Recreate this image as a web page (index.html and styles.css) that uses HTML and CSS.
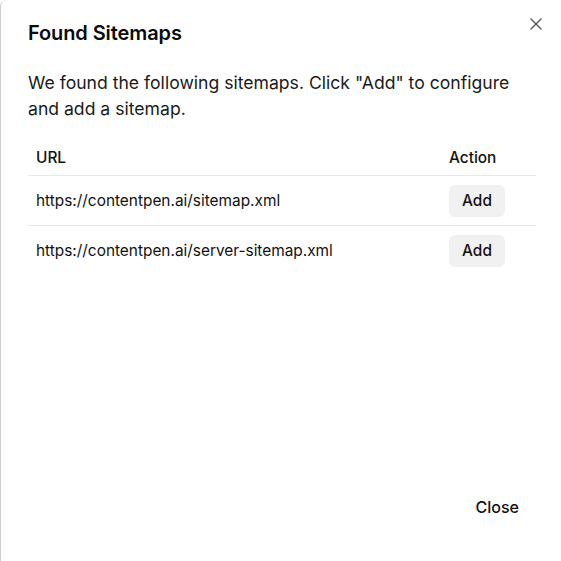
FILE: index.html
```html
<!DOCTYPE html>
<html>
<head>
<meta charset="utf-8">
<link rel="stylesheet" href="styles.css">
</head>
<body>
<div class="dialog">
  <button class="x" aria-label="Close">
    <svg width="12" height="12" viewBox="0 0 12 12"><path d="M1 1L11 11M11 1L1 11" stroke="#555" stroke-width="1.4" stroke-linecap="round"/></svg>
  </button>
  <h2 class="title">Found Sitemaps</h2>
  <p class="desc">We found the following sitemaps. Click "Add" to configure and add a sitemap.</p>
  <table class="tbl">
    <thead>
      <tr><th class="c-url">URL</th><th class="c-act">Action</th></tr>
    </thead>
    <tbody>
      <tr><td class="c-url">https://contentpen.ai/sitemap.xml</td><td class="c-act"><button class="add">Add</button></td></tr>
      <tr><td class="c-url">https://contentpen.ai/server-sitemap.xml</td><td class="c-act"><button class="add">Add</button></td></tr>
    </tbody>
  </table>
  <div class="footer"><button class="close">Close</button></div>
</div>
</body>
</html>
```
FILE: styles.css
```css
html, body { margin: 0; padding: 0; background: #fff; }
body { font-family: Inter, "Noto Sans", sans-serif; color: #111; }
.dialog {
  position: relative;
  box-sizing: border-box;
  width: 561px;
  height: 561px;
  padding: 20px 25px 0 27px;
  border-left: 1px solid #cfcfcf;
  border-top-left-radius: 6px;
  display: flex;
  flex-direction: column;
}
.x {
  position: absolute;
  top: 18px;
  right: 19px;
  border: 0;
  background: none;
  padding: 0;
  width: 12px;
  height: 12px;
  display: flex;
}
.title { margin: 0; font-size: 20px; font-weight: 600; line-height: 26px; letter-spacing: -0.1px; color: #0a0a0a; }
.desc { margin: 24px 0 0; font-size: 17.6px; line-height: 26px; color: #1a1a1a; }
.tbl { margin-top: 17px; width: 100%; border-collapse: collapse; font-size: 15.4px; }
.tbl th { font-weight: 500; text-align: left; height: 36px; padding: 0 8px; border-bottom: 1px solid #e8e8e8; vertical-align: middle; color: #111; }
.tbl td { padding: 0 8px; height: 49px; border-bottom: 1px solid #e8e8e8; vertical-align: middle; color: #111; }
.tbl tbody tr:last-child td { border-bottom: 0; }
.tbl .c-act { width: 79px; }
.add {
  font-family: inherit;
  font-size: 15.4px;
  font-weight: 500;
  background: #f1f1f1;
  border: 0;
  border-radius: 6px;
  width: 56px;
  height: 32px;
  color: #111;
  padding: 0;
}
.footer { margin-top: auto; display: flex; justify-content: flex-end; padding-bottom: 36px; }
.close {
  font-family: inherit;
  font-size: 16px;
  font-weight: 500;
  background: none;
  border: 0;
  padding: 0 17px 0 0;
  color: #111;
  height: 36px;
}
```
